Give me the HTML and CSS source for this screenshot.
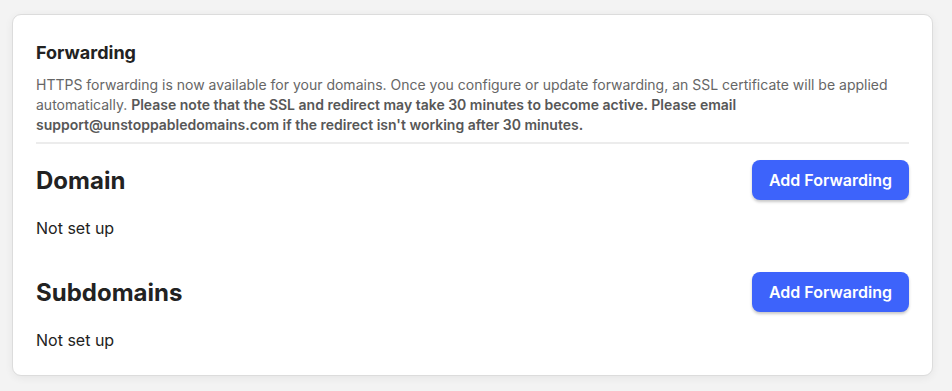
FILE: index.html
```html
<!DOCTYPE html>
<html>
<head>
<meta charset="utf-8">
<link rel="stylesheet" href="styles.css">
</head>
<body>
<div class="card">
  <h2 class="title">Forwarding</h2>
  <p class="desc">HTTPS forwarding is now available for your domains. Once you configure or update forwarding, an SSL certificate will be applied automatically. <b>Please note that the SSL and redirect may take 30 minutes to become active. Please email support@unstoppabledomains.com if the redirect isn't working after 30 minutes.</b></p>
  <div class="divider"></div>
  <div class="section">
    <div class="row">
      <h3 class="heading">Domain</h3>
      <button class="btn">Add Forwarding</button>
    </div>
    <p class="status">Not set up</p>
  </div>
  <div class="section second">
    <div class="row">
      <h3 class="heading">Subdomains</h3>
      <button class="btn">Add Forwarding</button>
    </div>
    <p class="status">Not set up</p>
  </div>
</div>
</body>
</html>
```

FILE: styles.css
```css
html, body {
  margin: 0;
  background: #f3f3f3;
}
body {
  padding: 14px 19px 15px 12px;
  font-family: Inter, "Noto Sans", sans-serif;
  color: #222;
}
.card {
  width: 921px;
  height: 362px;
  box-sizing: border-box;
  background: #fff;
  border: 1px solid #dcdcdc;
  border-radius: 9px;
  box-shadow: 0 2px 8px rgba(0,0,0,0.06);
  padding: 25px 23px 0 23px;
}
.title {
  margin: 0;
  font-size: 18px;
  line-height: 26px;
  font-weight: 700;
  color: #222;
}
.desc {
  margin: 9px 0 0;
  font-size: 14px;
  line-height: 20px;
  color: #666;
}
.desc b {
  font-weight: 600;
  color: #575757;
}
.divider {
  height: 2px;
  background: #ececec;
  margin-top: 7px;
}
.section {
  margin-top: 16px;
}
.section.second {
  margin-top: 33px;
}
.row {
  display: flex;
  justify-content: space-between;
  align-items: center;
  height: 40px;
}
.heading {
  margin: 0;
  font-size: 24px;
  font-weight: 700;
  color: #222;
}
.btn {
  height: 40px;
  width: 157px;
  border: none;
  border-radius: 8px;
  background: #3d63fb;
  color: #fff;
  font-family: Inter, "Noto Sans", sans-serif;
  font-size: 16px;
  font-weight: 600;
  box-shadow: 0 2px 3px rgba(0,0,0,0.22);
  padding: 0;
}
.status {
  margin: 17px 0 0;
  font-size: 16px;
  line-height: 22px;
  color: #222;
}
```
